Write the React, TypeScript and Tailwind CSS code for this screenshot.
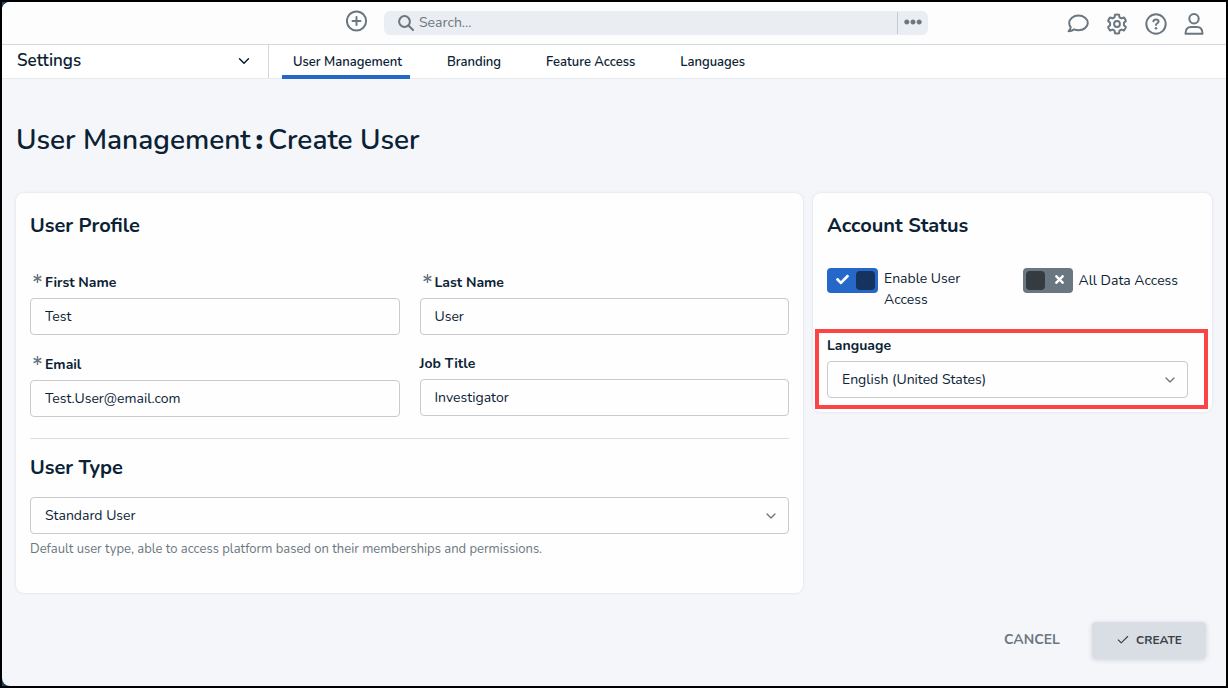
import React, { useState } from "react";
import { FaEllipsisH, FaCheck, FaTimes, FaAsterisk } from "react-icons/fa";
import { Check, ChevronDown } from "lucide-react";

const TABS = ["User Management", "Branding", "Feature Access", "Languages"];

function PlusCircleIcon() {
  return (
    <svg viewBox="0 0 22 22" className="size-[22px]" fill="none" stroke="currentColor" strokeWidth="2" strokeLinecap="round">
      <circle cx="10.5" cy="11" r="9.6" />
      <path d="M10.500 7v8M6.500 11h8" />
    </svg>
  );
}

function SearchIcon() {
  return (
    <svg viewBox="0 0 16 16" className="ml-[14px] size-4 shrink-0" fill="none" stroke="currentColor" strokeWidth="2" strokeLinecap="round" aria-hidden="true">
      <circle cx="6.500" cy="6.500" r="5.400" />
      <path d="M10.700 10.700l4.300 4.300" />
    </svg>
  );
}

function CommentIcon() {
  return (
    <svg viewBox="0 0 22 22" className="size-[22px]" fill="none" stroke="currentColor" strokeWidth="2" strokeLinejoin="round">
      <path d="M11.500 2.500c5.100 0 9.300 3.300 9.300 7.400s-4.200 7.400-9.300 7.400c-1.600 0-3.100-.3-4.400-.9-1.500 1.200-3.300 1.900-5.500 1.900 1.100-1.200 1.900-2.700 2.100-4.200C2.700 12.900 2.200 11.500 2.200 9.900c0-4.100 4.200-7.400 9.300-7.400z" />
    </svg>
  );
}

function GearIcon() {
  return (
    <svg viewBox="0 0 22 22" className="size-[22px]" fill="none" stroke="currentColor" strokeWidth="2" strokeLinejoin="round">
      <path d="M9 1.700q2-.5 4 0l.5 2.600 1.900 1.100 2.500-.9q1.400 1.500 2 3.500l-2 1.800v2.400l2 1.800q-.6 2-2 3.500l-2.500-.9-1.900 1.100-.5 2.600q-2 .5-4 0l-.5-2.600-1.900-1.100-2.500.9q-1.400-1.500-2-3.500l2-1.800V9.800L2.100 8q.6-2 2-3.500l2.500.9 1.900-1.100z" />
      <circle cx="11" cy="11" r="2.900" />
    </svg>
  );
}

function HelpIcon() {
  return (
    <svg viewBox="0 0 22 22" className="size-[22px]" fill="none" stroke="currentColor" strokeWidth="2" strokeLinecap="round">
      <circle cx="11" cy="11" r="9.700" />
      <path d="M8.400 8.300c.2-1.300 1-1.900 2.500-1.900 1.600 0 2.700.8 2.700 2.100 0 1.700-2.600 1.900-2.600 3.500" />
      <circle cx="11" cy="15.200" r="1.300" fill="currentColor" stroke="none" />
    </svg>
  );
}

function PersonIcon() {
  return (
    <svg viewBox="0 0 20 22" className="h-[22px] w-5" fill="none" stroke="currentColor" strokeWidth="2" strokeLinejoin="round">
      <circle cx="10" cy="5.800" r="4.700" />
      <path d="M1.500 20.800c0-4.600 2-6.800 5.500-6.800h6c3.500 0 5.500 2.200 5.500 6.800z" />
    </svg>
  );
}

function FieldLabel({ id, text, required }: { id: string; text: string; required?: boolean }) {
  if (!required) {
    return (
      <label htmlFor={id} className="mb-[7px] block text-sm leading-4 font-bold">
        {text}
      </label>
    );
  }
  return (
    <label htmlFor={id} className="mb-[7px] flex items-start gap-[3px] pl-[3px] text-sm leading-[17px] font-bold">
      <FaAsterisk className="size-[9px] text-[#6b7780]" aria-hidden="true" />
      {text}
    </label>
  );
}

function TextField({ id, label, value, required }: { id: string; label: string; value: string; required?: boolean }) {
  return (
    <div>
      <FieldLabel id={id} text={label} required={required} />
      <input
        id={id}
        type="text"
        defaultValue={value}
        required={required}
        className="block h-[37px] w-full rounded border border-[#c8cacc] bg-[#fefefe] px-[14px] text-sm outline-none"
      />
    </div>
  );
}

function SelectField({ id, options, label }: { id: string; options: string[]; label?: string }) {
  return (
    <div className="relative">
      <select
        id={id}
        aria-label={label}
        className="block h-[37px] w-full appearance-none rounded border border-[#c8cacc] bg-[#fefefe] px-[14px] text-sm outline-none"
      >
        {options.map((o) => (
          <option key={o}>{o}</option>
        ))}
      </select>
      <ChevronDown className="pointer-events-none absolute top-[11px] right-[10px] size-4 text-[#6b7780]" strokeWidth={2} aria-hidden="true" />
    </div>
  );
}

function Toggle({ label, initial, narrow }: { label: string; initial: boolean; narrow?: boolean }) {
  const [on, setOn] = useState(initial);
  return (
    <label className="flex items-start gap-[6px] text-sm leading-[21px]">
      <input type="checkbox" checked={on} onChange={() => setOn(!on)} className="peer sr-only" />
      <span
        className={
          on
            ? "flex h-[25px] w-[51px] shrink-0 items-center justify-between rounded bg-[#2668c9] pr-[3px] pl-[9px]"
            : "flex h-[25px] w-[50px] shrink-0 flex-row-reverse items-center justify-between rounded bg-[#6b7780] pr-[7px] pl-[3px]"
        }
      >
        {on ? <FaCheck className="mb-[3px] size-[13px] text-white" /> : <FaTimes className="mb-[3px] size-[13px] text-white" />}
        <span className={on ? "size-[19px] rounded bg-[#16325f]" : "size-[19px] rounded bg-[#343b41]"} />
      </span>
      <span className={narrow ? "max-w-24" : "pt-[2px] whitespace-nowrap"}>{label}</span>
    </label>
  );
}

export default function App() {
  const [tab, setTab] = useState(TABS[0]);
  return (
    <div className="min-h-screen border-2 border-black bg-[#0f4674] font-['Nunito','Lato',sans-serif] text-[#0b2234]">
      <div className="flex min-h-[calc(100vh-4px)] flex-col overflow-hidden rounded-l-lg bg-[#f5f6fa]">
        <header className="grid h-[43px] grid-cols-[344fr_582fr_298fr] items-start border-b border-[#d5d9dd] bg-[#fdfdfe] text-[#6b7780]">
          <div />
          <div className="flex items-start gap-4 pt-2">
            <button type="button" aria-label="Add">
              <PlusCircleIcon />
            </button>
            <div className="mt-px flex h-6 min-w-0 flex-1 items-center rounded-md bg-[#eaedf2]">
              <SearchIcon />
              <input
                type="search"
                aria-label="Search"
                placeholder="Search..."
                className="min-w-0 flex-1 bg-transparent px-[5px] text-sm outline-none placeholder:text-[#6b7780]"
              />
              <button type="button" aria-label="Search options" className="flex h-[22px] w-[31px] items-center justify-center border-l border-[#c5cad0]">
                <FaEllipsisH className="mb-[2px] size-[18px]" />
              </button>
            </div>
          </div>
          <div className="flex items-center justify-end gap-[17px] pt-[11px] pr-[22px]">
            <button type="button" aria-label="Messages">
              <CommentIcon />
            </button>
            <button type="button" aria-label="Settings">
              <GearIcon />
            </button>
            <button type="button" aria-label="Help">
              <HelpIcon />
            </button>
            <button type="button" aria-label="Account">
              <PersonIcon />
            </button>
          </div>
        </header>

        <nav className="flex h-[34px] items-stretch border-b border-[#e6eaee] bg-white">
          <button type="button" className="flex w-[267px] items-center justify-between border-r border-[#d5d9dd] pr-[15px] pb-px pl-[15px] text-[17px] leading-6 font-semibold">
            Settings
            <ChevronDown className="size-[18px]" strokeWidth={2} aria-hidden="true" />
          </button>
          <div className="flex gap-[26px] pl-[13px]">
            {TABS.map((t) => (
              <button
                key={t}
                type="button"
                onClick={() => setTab(t)}
                className={
                  t === tab
                    ? "h-[34px] border-b-4 border-[#2668c9] pt-[3px] pr-2 pl-[11px] text-[13px] leading-5 font-semibold"
                    : "h-[34px] border-b-4 border-transparent pt-[3px] pr-2 pl-[11px] text-[13px] leading-5 font-semibold"
                }
              >
                {t}
              </button>
            ))}
          </div>
        </nav>

        <main className="px-[14px] pt-[43px] pb-[27px]">
          <h1 className="flex text-[28px] leading-9 font-semibold">
            <span>User Management</span>
            <span className="px-[5px] font-black">:</span>
            <span>Create User</span>
          </h1>

          <div className="mt-[35px] grid grid-cols-[787fr_399fr] items-start gap-[10px]">
            <section className="rounded-lg bg-[#fefefe] px-[14px] pt-[19px] pb-9 shadow-[0_0_3px_rgba(20,40,70,0.12)]">
              <h2 className="text-xl leading-7 font-bold">User Profile</h2>
              <div className="mt-[34px] grid grid-cols-2 gap-5">
                <div className="flex flex-col gap-[21px]">
                  <TextField id="first-name" label="First Name" value="Test" required />
                  <TextField id="email" label="Email" value="Test.User@email.com" required />
                </div>
                <div className="flex flex-col gap-[21px]">
                  <TextField id="last-name" label="Last Name" value="User" required />
                  <TextField id="job-title" label="Job Title" value="Investigator" />
                </div>
              </div>
              <hr className="mt-[21px] border-[#dcdfe1]" />
              <h2 className="mt-[15px] text-xl leading-7 font-bold">User Type</h2>
              <div className="mt-[15px]">
                <SelectField id="user-type" label="User Type" options={["Standard User"]} />
              </div>
              <p className="mt-[7px] text-[13px] leading-4 text-[#6b7780]">
                Default user type, able to access platform based on their memberships and permissions.
              </p>
            </section>

            <section className="rounded-lg bg-[#fefefe] px-[14px] pt-[19px] pb-[14px] shadow-[0_0_3px_rgba(20,40,70,0.12)]">
              <h2 className="text-xl leading-7 font-bold">Account Status</h2>
              <div className="mt-7 grid grid-cols-2 gap-5">
                <Toggle label="Enable User Access" initial narrow />
                <Toggle label="All Data Access" initial={false} />
              </div>
              <div className="relative mt-7 pr-[10px]">
                <FieldLabel id="language" text="Language" />
                <SelectField id="language" options={["English (United States)"]} />
                <div className="pointer-events-none absolute -top-[9px] -right-[10px] -bottom-[11px] -left-3 border-4 border-[#fc4444]" />
              </div>
            </section>
          </div>

          <div className="mt-[29px] flex items-center justify-end gap-5 pr-[6px]">
            <button type="button" className="h-[37px] px-3 pb-px text-sm font-bold text-[#6b7780]">
              CANCEL
            </button>
            <button
              type="button"
              className="flex h-[37px] w-[114px] items-center justify-center gap-[6px] rounded bg-[#d9dee4] pb-px text-xs font-bold text-[#3b4248] shadow-[0_1px_5px_rgba(20,40,70,0.16)]"
            >
              <Check className="size-[14px]" strokeWidth={2} aria-hidden="true" />
              CREATE
            </button>
          </div>
        </main>
      </div>
    </div>
  );
}
